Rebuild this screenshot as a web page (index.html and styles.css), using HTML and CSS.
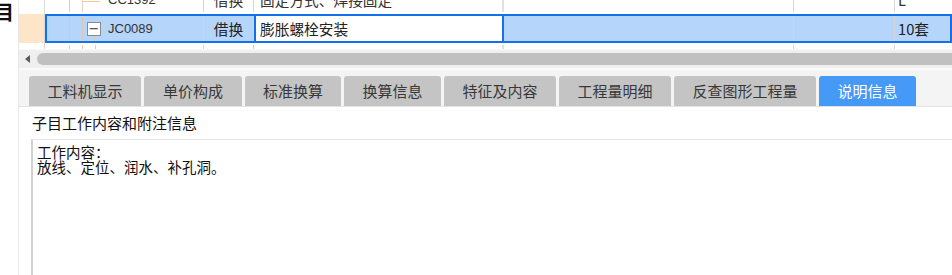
FILE: index.html
```html
<!doctype html>
<html lang="zh-CN">
	<head>
		<meta charset="UTF-8">
		<title>说明信息</title>
		<link rel="stylesheet" href="styles.css">
	</head>
	<body>
		<div class="app">
			<div class="side">
				<div class="side-label">项<br>目</div>
			</div>
			<div class="main">
				<div class="grid">
					<div class="row">
						<div class="c0"></div>
						<div class="cells">
							<div class="c c1 tree-top"><span class="code">CC1392</span></div>
							<div class="c c2">借换</div>
							<div class="c c3">固定方式、焊接固定</div>
							<div class="c c4"></div>
							<div class="c c5"></div>
							<div class="c c6">L</div>
						</div>
					</div>
					<div class="row sel">
						<div class="c0"></div>
						<div class="cells">
							<div class="c c1 tree-mid"><span class="fold">−</span><span class="code">JC0089</span></div>
							<div class="c c2">借换</div>
							<div class="c c3">膨胀螺栓安装</div>
							<div class="c c4"></div>
							<div class="c c5"></div>
							<div class="c c6">10套</div>
						</div>
					</div>
					<div class="row">
						<div class="c0"></div>
						<div class="cells">
							<div class="c c1 tree-low"></div>
							<div class="c c2"></div>
							<div class="c c3"></div>
							<div class="c c4"></div>
							<div class="c c5"></div>
							<div class="c c6"></div>
						</div>
					</div>
				</div>
				<div class="hscroll">
					<span class="arrow"></span>
					<span class="thumb"></span>
				</div>
				<div class="tabs">
					<div class="tab w1">工料机显示</div>
					<div class="tab w2">单价构成</div>
					<div class="tab w3">标准换算</div>
					<div class="tab w4">换算信息</div>
					<div class="tab w5">特征及内容</div>
					<div class="tab w6">工程量明细</div>
					<div class="tab w7">反查图形工程量</div>
					<div class="tab w8 active">说明信息</div>
				</div>
				<div class="panel">
					<div class="panel-title">子目工作内容和附注信息</div>
					<div class="memo">工作内容：<br>放线、定位、润水、补孔洞。</div>
				</div>
			</div>
		</div>
	</body>
</html>
```

FILE: styles.css
```css
*{margin:0;padding:0;box-sizing:border-box;}
body{
	width:952px;height:275px;
	overflow:hidden;
	background:#fff;
	font-family:"Noto Sans CJK SC","Noto Sans",sans-serif;
	color:#222;
}
.app{
	display:flex;
	height:275px;
}
.side{
	width:19px;
	border-right:1px solid #e8e8e8;
	overflow:hidden;
	background:#fff;
}
.side-label{
	font-size:20px;font-weight:bold;
	line-height:22px;
	margin-top:-21px;margin-left:-6px;
	color:#111;
}
.main{
	flex:1;
	display:flex;
	flex-direction:column;
	min-width:0;
}
/* grid */
.grid{
	height:49px;
	overflow:hidden;
	background:#fff;
}
.row{
	display:flex;
	height:29px;
	font-size:14.7px;
}
.row:first-child{margin-top:-15px;}
.c0{
	width:26px;
	border-right:1px solid #d9d9d9;
	background:#fff;
}
.sel .c0{background:#fde5c9;}
.cells{
	flex:1;
	display:flex;
	border:2px solid transparent;
	border-left-width:2px;
	min-width:0;
}
.sel .cells{
	border-color:#1570ee;
	background:#b5d5fb;
}
.c{
	display:flex;
	align-items:center;
	white-space:nowrap;
	overflow:hidden;
	color:#333;
	border-right:1px solid #d4d4d4;
}
.c1{width:157px;padding-left:61px;}
.c2{width:50px;justify-content:center;}
.c3{width:250px;padding-left:4px;border-left:2px solid transparent;border-right:2px solid #e0e0e0;}
.sel .c3{
	background:#fff;
	border-left-color:#1570ee;
	border-right-color:#1570ee;
	color:#222;
}
.c4{width:290px;}
.c5{width:101px;}
.c6{flex:1;padding-left:3px;border-right:0;}
.sel .c{color:#222;}
.code{
	font-family:"Liberation Sans",sans-serif;
	font-size:13px;
	color:#333;
}
.sel .c1{padding-left:40px;}
.fold{
	width:14px;height:14px;
	margin-right:7px;
	border:1px solid #8a8a8a;
	background:#fff;
	font-family:"DejaVu Sans",sans-serif;
	font-size:13px;line-height:11px;
	text-align:center;
	color:#333;
	display:inline-block;
}
.tree-top{
	background:
		linear-gradient(to right,transparent 22px,#f6c998 22px,#f6c998 23px,transparent 23px),
		linear-gradient(to right,transparent 35px,#e2d4c4 35px,#e2d4c4 36px,transparent 36px),
		linear-gradient(#f6c998,#f6c998) 35px 14px/18px 1px no-repeat;
}
.tree-mid{
	background:
		linear-gradient(to right,transparent 22px,rgba(246,190,130,.6) 22px,rgba(246,190,130,.6) 23px,transparent 23px),
		linear-gradient(to right,transparent 35px,rgba(246,190,130,.6) 35px,rgba(246,190,130,.6) 36px,transparent 36px),
		linear-gradient(rgba(246,190,130,.6),rgba(246,190,130,.6)) 47px 19px/1px 8px no-repeat;
}
.tree-low{
	background:
		linear-gradient(to right,transparent 22px,#f6c998 22px,#f6c998 23px,transparent 23px,
			transparent 35px,#f6c998 35px,#f6c998 36px,transparent 36px,
			transparent 48px,#f6c998 48px,#f6c998 49px,transparent 49px);
}
/* scrollbar */
.hscroll{
	height:21px;
	display:flex;
	align-items:center;
	gap:7px;
	padding-left:6px;
	background:#efefef;
	border-top:1px solid #fafafa;
	border-bottom:2px solid #fafafa;
}
.arrow{
	width:0;height:0;
	border-top:4px solid transparent;
	border-bottom:4px solid transparent;
	border-right:5px solid #5e5e5e;
}
.thumb{
	flex:1;
	height:12px;
	margin-right:-8px;
	background:#c0c0c0;
	border-radius:6px;
}
/* tabs */
.tabs{
	height:36px;
	display:flex;
	align-items:flex-end;
	gap:3px;
	padding-left:10px;
	background:#f4f4f4;
}
.tab{
	height:30px;
	line-height:30px;
	text-align:center;
	font-size:15px;
	color:#383838;
	background:#c4c4c4;
	border-radius:3px 3px 0 0;
}
.w1{width:112px;}
.w2{width:98px;}
.w3{width:96px;}
.w4{width:97px;}
.w5{width:112px;}
.w6{width:112px;}
.w7{width:142px;}
.w8{width:97px;}
.tab.active{
	background:#449af6;
	color:#fff;
}
/* panel */
.panel{
	flex:1;
	display:flex;
	flex-direction:column;
	border-top:1px solid #e3e3e3;
	padding-top:5px;
	background:#fff;
}
.panel-title{
	padding-left:13px;
	font-size:15px;
	line-height:22px;
	color:#111;
}
.memo{
	flex:1;
	margin:5px 0 0 12px;
	padding:4px 0 0 4px;
	border-top:1px solid #e4e4e4;
	border-left:2px solid #d2d2d2;
	font-size:14.5px;
	line-height:15px;
	color:#111;
}
```
